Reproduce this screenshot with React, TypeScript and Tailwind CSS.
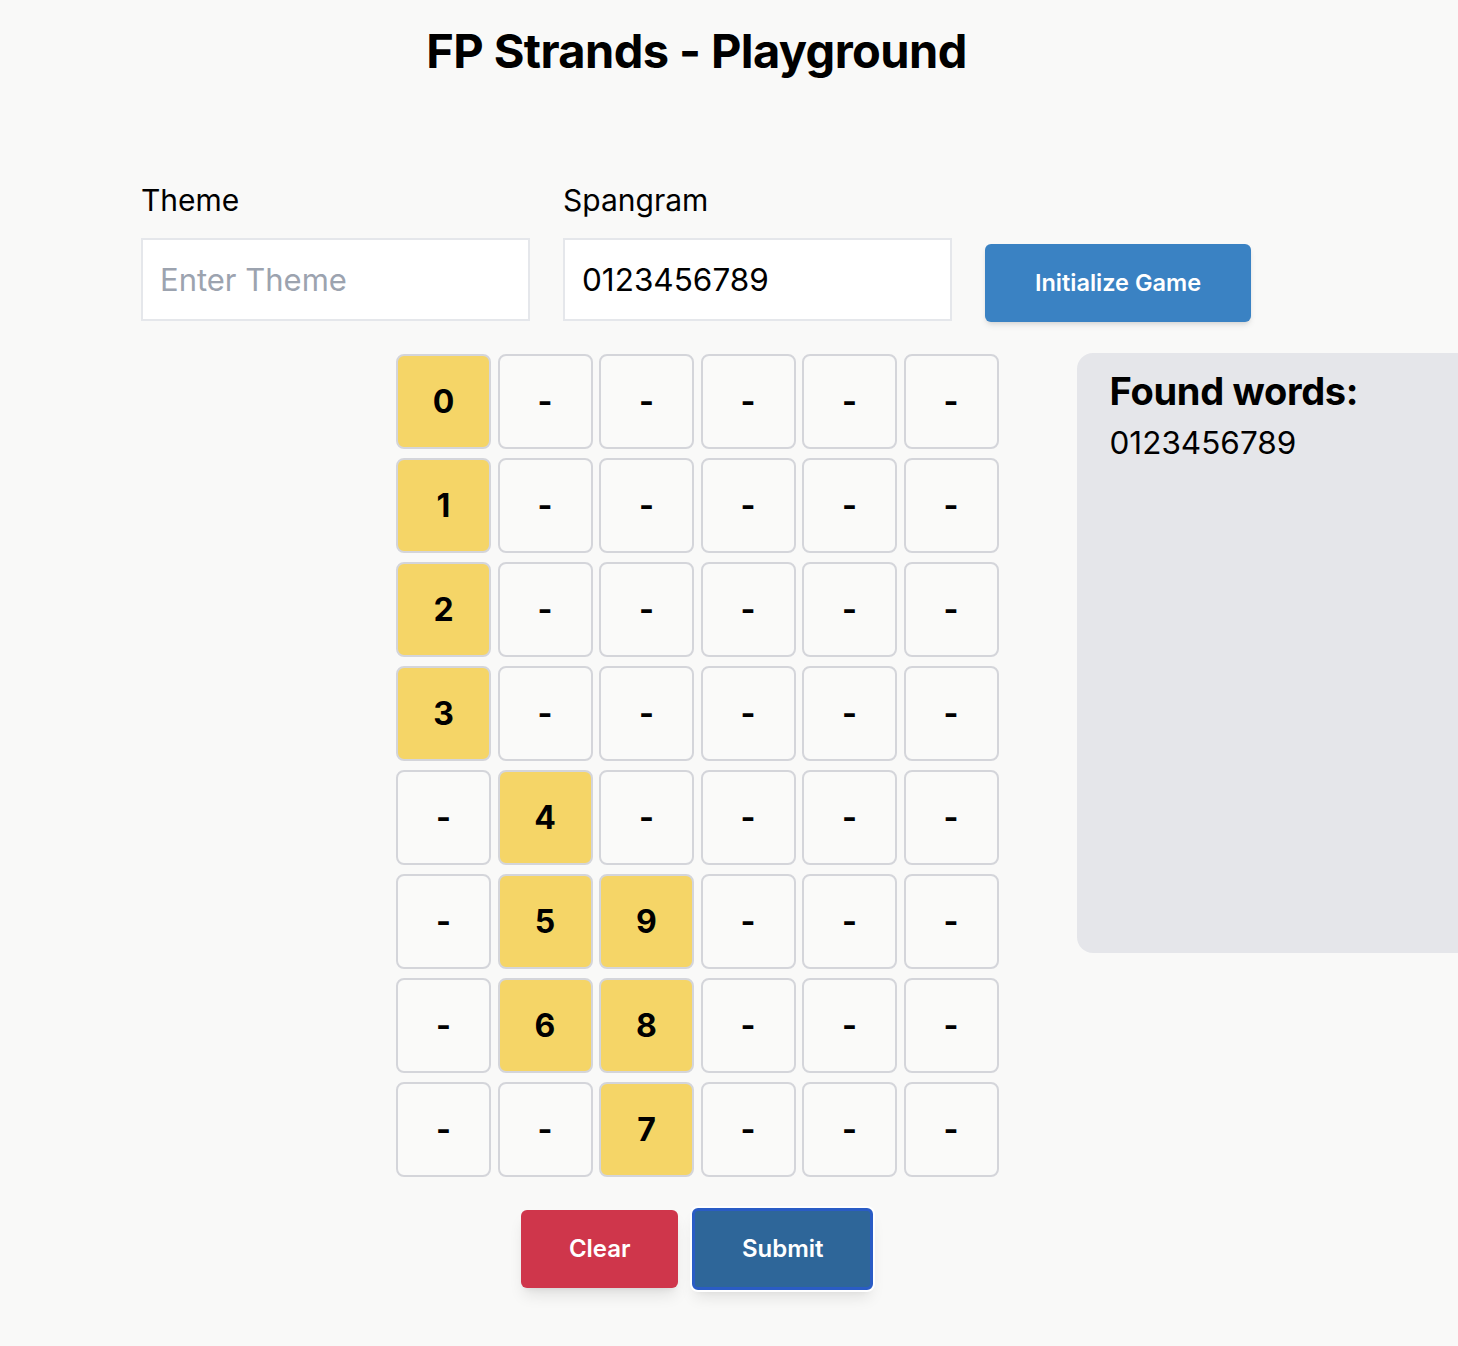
import React from "react";

const path: Record<string, string> = {
  "0,0": "0",
  "1,0": "1",
  "2,0": "2",
  "3,0": "3",
  "4,1": "4",
  "5,1": "5",
  "6,1": "6",
  "7,2": "7",
  "6,2": "8",
  "5,2": "9",
};

const Cell = ({ letter }: { letter?: string }) => (
  <div
    className={`w-[95px] h-[95px] rounded-lg border-2 border-[#d4d5da] flex items-center justify-center text-[32px] font-bold text-black ${
      letter ? "bg-[#f5d567]" : "bg-[#fafaf9]"
    }`}
  >
    {letter ?? "-"}
  </div>
);

export default function App() {
  const rows = Array.from({ length: 8 }, (_, r) => r);
  const cols = Array.from({ length: 6 }, (_, c) => c);

  return (
    <div
      className="min-h-screen w-full overflow-hidden bg-[#f9f9f8] text-black"
      style={{ fontFamily: "Inter, 'Noto Sans', sans-serif" }}
    >
      <div className="w-[1393px]">
        <h1 className="pt-[24px] text-center text-[47px] leading-[54px] font-bold tracking-[-0.6px]">
          FP Strands - Playground
        </h1>

        {/* setup row */}
        <div className="mt-[104px] flex items-end gap-[33px] pl-[141px]">
          <div className="flex flex-col">
            <label className="text-[30px] leading-[36px] mb-[20px]">Theme</label>
            <input
              placeholder="Enter Theme"
              className="w-[389px] h-[83px] bg-white border-2 border-[#e5e7eb] px-[17px] text-[31px] placeholder:text-[#9ca3af] outline-none"
            />
          </div>
          <div className="flex flex-col">
            <label className="text-[30px] leading-[36px] mb-[20px]">Spangram</label>
            <input
              defaultValue="0123456789"
              className="w-[389px] h-[83px] bg-white border-2 border-[#e5e7eb] px-[17px] text-[31.5px] outline-none"
            />
          </div>
          <button className="mb-[-1px] w-[266px] h-[78px] rounded-md bg-[#3a82c3] text-white text-[23.5px] font-semibold shadow-md">
            Initialize Game
          </button>
        </div>

        {/* board + found words */}
        <div className="mt-[33px] flex items-start pl-[396px]">
          <div className="flex flex-col items-center shrink-0">
            <div className="grid grid-cols-[repeat(6,95px)] gap-x-[6.5px] gap-y-[9px]">
              {rows.map((r) =>
                cols.map((c) => <Cell key={`${r}-${c}`} letter={path[`${r},${c}`]} />)
              )}
            </div>
            <div className="mt-[31px] flex items-center gap-[14px]">
              <button className="w-[157px] h-[78px] rounded-md bg-[#cf364b] text-white text-[24px] font-semibold shadow-lg">
                Clear
              </button>
              <button className="w-[181px] h-[82px] rounded-md bg-[#2e6699] border-[3px] border-[#2a5cc5] ring-2 ring-white text-white text-[24px] font-semibold shadow-lg">
                Submit
              </button>
            </div>
          </div>
          <div className="ml-[78px] -mt-px w-[460px] h-[600px] shrink-0 rounded-l-2xl bg-[#e5e6ea] pl-[33px] pt-[14px]">
            <h2 className="text-[38px] leading-[48px] font-bold tracking-[-0.3px]">Found words:</h2>
            <p className="mt-[8px] text-[31.5px] leading-[40px]">0123456789</p>
          </div>
        </div>
      </div>
    </div>
  );
}
